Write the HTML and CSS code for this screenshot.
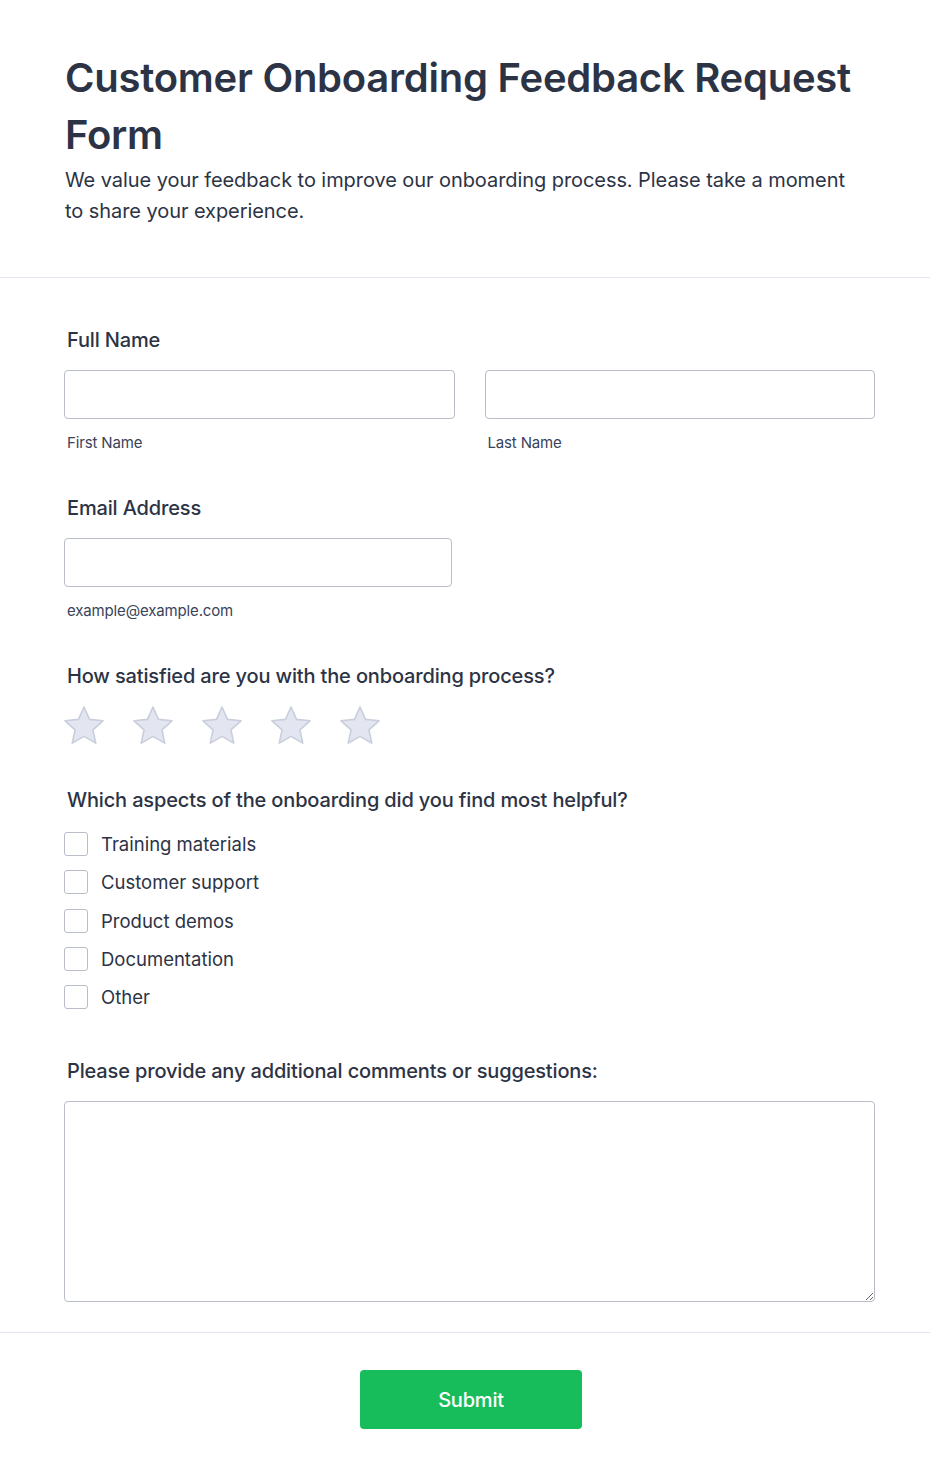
FILE: index.html
```html
<!DOCTYPE html>
<html lang="en">
<head>
<meta charset="utf-8">
<title>Customer Onboarding Feedback Request Form</title>
<link rel="stylesheet" href="styles.css">
</head>
<body>
<div class="page">
  <header class="form-header">
    <h1 class="title">Customer Onboarding Feedback Request Form</h1>
    <p class="subtitle">We value your feedback to improve our onboarding process. Please take a moment to share your experience.</p>
  </header>

  <form class="form-body">
    <div class="field field-name">
      <label class="label">Full Name</label>
      <div class="name-row">
        <div class="name-col">
          <input class="input" type="text">
          <span class="sublabel">First Name</span>
        </div>
        <div class="name-col">
          <input class="input" type="text">
          <span class="sublabel">Last Name</span>
        </div>
      </div>
    </div>

    <div class="field field-email">
      <label class="label">Email Address</label>
      <input class="input input-email" type="email">
      <span class="sublabel">example@example.com</span>
    </div>

    <div class="field field-rating">
      <label class="label">How satisfied are you with the onboarding process?</label>
      <div class="stars">
        <svg class="star" viewBox="-1 -1 40 38"><path d="M19 0 L24.53 12.4 L38.02 13.82 L27.94 22.9 L30.76 36.18 L19 29.4 L7.24 36.18 L10.06 22.9 L-0.02 13.82 L13.47 12.4 Z"/></svg>
        <svg class="star" viewBox="-1 -1 40 38"><path d="M19 0 L24.53 12.4 L38.02 13.82 L27.94 22.9 L30.76 36.18 L19 29.4 L7.24 36.18 L10.06 22.9 L-0.02 13.82 L13.47 12.4 Z"/></svg>
        <svg class="star" viewBox="-1 -1 40 38"><path d="M19 0 L24.53 12.4 L38.02 13.82 L27.94 22.9 L30.76 36.18 L19 29.4 L7.24 36.18 L10.06 22.9 L-0.02 13.82 L13.47 12.4 Z"/></svg>
        <svg class="star" viewBox="-1 -1 40 38"><path d="M19 0 L24.53 12.4 L38.02 13.82 L27.94 22.9 L30.76 36.18 L19 29.4 L7.24 36.18 L10.06 22.9 L-0.02 13.82 L13.47 12.4 Z"/></svg>
        <svg class="star" viewBox="-1 -1 40 38"><path d="M19 0 L24.53 12.4 L38.02 13.82 L27.94 22.9 L30.76 36.18 L19 29.4 L7.24 36.18 L10.06 22.9 L-0.02 13.82 L13.47 12.4 Z"/></svg>
      </div>
    </div>

    <div class="field field-check">
      <label class="label">Which aspects of the onboarding did you find most helpful?</label>
      <div class="checks">
        <label class="check"><span class="box"></span><span class="check-text">Training materials</span></label>
        <label class="check"><span class="box"></span><span class="check-text">Customer support</span></label>
        <label class="check"><span class="box"></span><span class="check-text">Product demos</span></label>
        <label class="check"><span class="box"></span><span class="check-text">Documentation</span></label>
        <label class="check"><span class="box"></span><span class="check-text">Other</span></label>
      </div>
    </div>

    <div class="field field-comments">
      <label class="label">Please provide any additional comments or suggestions:</label>
      <textarea class="textarea"></textarea>
    </div>
  </form>

  <div class="form-footer">
    <button class="submit" type="button">Submit</button>
  </div>
</div>
</body>
</html>
```

FILE: styles.css
```css
* { box-sizing: border-box; }

html, body {
  margin: 0;
  padding: 0;
  background: #ffffff;
}

body {
  font-family: "Inter", "Noto Sans", sans-serif;
  color: #2c3345;
}

.page {
  width: 930px;
}

.form-header {
  padding: 49px 40px 50px 65px;
  border-bottom: 1px solid #e3e5f0;
}

.title {
  margin: 0;
  font-size: 40px;
  font-weight: 600;
  line-height: 57px;
  color: #2c3345;
  letter-spacing: -0.25px;
}

.subtitle {
  margin: 2px 0 0;
  max-width: 790px;
  font-size: 20px;
  line-height: 31px;
  letter-spacing: -0.07px;
  color: #2c3345;
}

.form-body {
  padding: 49px 55px 30px 64px;
  border-bottom: 1px solid #e3e5f0;
}

.field {
  display: flex;
  flex-direction: column;
  align-items: flex-start;
}

.label {
  display: block;
  font-size: 20px;
  font-weight: 500;
  letter-spacing: -0.15px;
  line-height: 27px;
  padding-left: 3px;
  margin-bottom: 16px;
  color: #2c3345;
}

.name-row {
  display: flex;
  gap: 30px;
  width: 811px;
}

.name-col {
  flex: 1;
  display: flex;
  flex-direction: column;
}

.input {
  display: block;
  width: 100%;
  height: 49px;
  border: 1px solid #b8bdc9;
  border-radius: 4px;
  background: #fff;
  font: inherit;
  outline: none;
}

.input-email {
  width: 388px;
}

.sublabel {
  display: block;
  font-size: 15px;
  line-height: 20px;
  letter-spacing: -0.15px;
  margin-top: 14px;
  padding-left: 3px;
  color: #39435a;
}

.field-name,
.field-email {
  margin-bottom: 42px;
}

.field-rating {
  margin-bottom: 43px;
}

.stars {
  display: flex;
  gap: 29px;
}

.star {
  width: 40px;
  height: 38px;
  display: block;
}

.star path {
  fill: #e3e6f0;
  stroke: #c8cedb;
  stroke-width: 1.6;
  stroke-linejoin: round;
}

.field-check .label {
  margin-bottom: 18px;
}

.checks {
  display: flex;
  flex-direction: column;
  gap: 14.25px;
}

.check {
  display: flex;
  align-items: center;
  gap: 13px;
  height: 24px;
}

.box {
  width: 24px;
  height: 24px;
  border: 1px solid #b8bdc9;
  border-radius: 3px;
  background: #fff;
  flex: none;
}

.check-text {
  font-size: 18.5px;
  line-height: 24px;
  color: #2c3345;
}

.field-check {
  margin-bottom: 49px;
}

.textarea {
  display: block;
  width: 811px;
  height: 201px;
  border: 1px solid #b8bdc9;
  border-radius: 4px;
  background: #fff;
  resize: vertical;
  font: inherit;
  outline: none;
}

.form-footer {
  display: flex;
  justify-content: center;
  padding: 37px 0 50px 12px;
}

.submit {
  width: 222px;
  height: 59px;
  border: none;
  border-radius: 4px;
  background: #18bd5b;
  color: #ffffff;
  font-family: "Inter", "Noto Sans", sans-serif;
  font-size: 20px;
  font-weight: 500;
  letter-spacing: -0.2px;
  cursor: pointer;
}
```
